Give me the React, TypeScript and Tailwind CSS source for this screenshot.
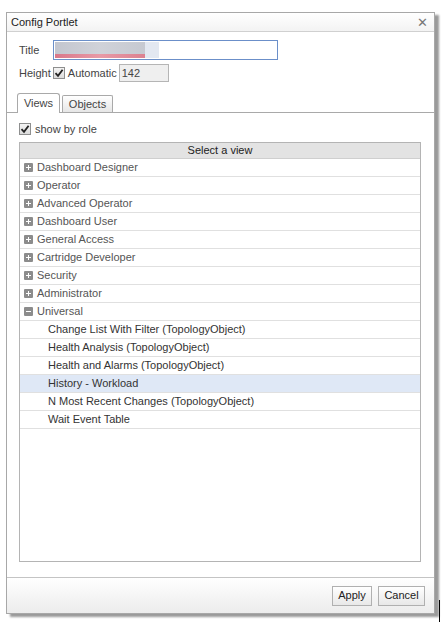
import React from 'react';

const groups = [
  'Dashboard Designer',
  'Operator',
  'Advanced Operator',
  'Dashboard User',
  'General Access',
  'Cartridge Developer',
  'Security',
  'Administrator',
];

const views = [
  'Change List With Filter (TopologyObject)',
  'Health Analysis (TopologyObject)',
  'Health and Alarms (TopologyObject)',
  'History - Workload',
  'N Most Recent Changes (TopologyObject)',
  'Wait Event Table',
];

function Toggle({ open }: { open: boolean }) {
  return (
    <svg width="9" height="9" viewBox="0 0 9 9" className="shrink-0">
      <rect width="9" height="9" rx="1" fill="#8c8c8c" />
      <rect x="2" y="4" width="5" height="1" fill="#fff" />
      {!open && <rect x="4" y="2" width="1" height="5" fill="#fff" />}
    </svg>
  );
}

function Check() {
  return (
    <span className="w-[12px] h-[12px] border border-[#8e8f8f] bg-gradient-to-b from-[#f4f4f4] to-[#dcdcdc] flex items-center justify-center shrink-0">
      <svg width="10" height="10" viewBox="0 0 10 10">
        <path d="M1.5 5.2 L4 7.8 L8.6 1.8" fill="none" stroke="#222" strokeWidth="1.8" />
      </svg>
    </span>
  );
}

export default function App() {
  return (
    <div className="relative w-[444px] h-[622px] bg-white text-[11px] text-[#444] font-['Liberation_Sans',Arial,sans-serif] pt-[12px] pl-[6px]">
      {/* dialog */}
      <div className="w-[429px] h-[602px] border border-[#a8a8a8] bg-white flex flex-col shadow-[4px_3px_2px_#9a9a9a]">
        <div className="h-[19px] flex items-center justify-between pl-[4px] pr-[6px] border-b border-[#d0d0d0] bg-gradient-to-b from-white to-[#f3f3f3]">
          <span className="text-[#222]">Config Portlet</span>
          <span className="text-[#777] text-[13px] leading-none">✕</span>
        </div>

        <div className="flex-1 flex flex-col pt-[8px]">
          <div className="flex items-center pl-[12px] h-[20px]">
            <span className="w-[34px]">Title</span>
            <div className="relative w-[225px] h-[20px] border border-[#6b8fc9] bg-white">
              <div className="absolute left-[1px] top-[1px] w-[104px] h-[16px] flex">
                <div className="flex-1 flex flex-col">
                  <div className="flex-1 bg-gradient-to-r from-[#c3c6cf] via-[#d0d2d9] to-[#c6c9d1]" />
                  <div className="h-[4px] bg-gradient-to-r from-[#d9788a] via-[#e89aa6] to-[#dc8190]" />
                </div>
                <div className="w-[14px] bg-[#e3e8f1]" />
              </div>
            </div>
          </div>

          <div className="flex items-center pl-[12px] mt-[4px] h-[18px] gap-[2px]">
            <span>Height</span>
            <Check />
            <span className="ml-[1px]">Automatic</span>
            <div className="w-[50px] h-[18px] border border-[#b5b5b5] bg-[#efefef] pl-[2px] leading-[16px] text-[#444]">142</div>
          </div>

          {/* tabs */}
          <div className="flex items-end mt-[11px] pl-[10px] h-[20px] border-b border-[#a9a9a9]">
            <div className="h-[20px] w-[43px] border border-b-0 border-[#a9a9a9] rounded-t-[3px] bg-white flex items-center justify-center -mb-px relative z-10">
              Views
            </div>
            <div className="h-[17px] w-[51px] ml-[2px] border border-b-0 border-[#a9a9a9] rounded-t-[2px] bg-gradient-to-b from-white to-[#e6e6e6] flex items-center justify-center">
              Objects
            </div>
          </div>

          <div className="flex items-center gap-[4px] pl-[12px] mt-[9px] h-[14px]">
            <Check />
            <span>show by role</span>
          </div>

          {/* view picker */}
          <div className="ml-[12px] mr-[13px] mt-[6px] h-[420px] border border-[#b4b4b4] bg-white">
            <div className="h-[16px] bg-[#e3e3e3] border-b border-[#cfcfcf] flex items-center justify-center text-[#222]">
              Select a view
            </div>
            {groups.map((g) => (
              <div key={g} className="h-[18px] border-b border-[#e0e0e0] flex items-center gap-[4px] pl-[4px] text-[#555]">
                <Toggle open={false} />
                <span>{g}</span>
              </div>
            ))}
            <div className="h-[18px] border-b border-[#e0e0e0] flex items-center gap-[4px] pl-[4px] text-[#555]">
              <Toggle open />
              <span>Universal</span>
            </div>
            {views.map((v) => (
              <div
                key={v}
                className={
                  'h-[18px] border-b border-[#e0e0e0] flex items-center pl-[28px] text-[#333] ' +
                  (v === 'History - Workload' ? 'bg-[#dfe8f6]' : '')
                }
              >
                {v}
              </div>
            ))}
          </div>
        </div>

        {/* footer */}
        <div className="h-[36px] border-t border-[#c4c4c4] bg-gradient-to-b from-white to-[#ececec] flex items-center justify-end gap-[6px] pr-[9px]">
          <button className="h-[20px] w-[40px] border border-[#b0b0b0] bg-gradient-to-b from-white to-[#e8e8e8] text-[#222]">Apply</button>
          <button className="h-[20px] w-[47px] border border-[#b0b0b0] bg-gradient-to-b from-white to-[#e8e8e8] text-[#222]">Cancel</button>
        </div>
      </div>
      <div className="absolute left-[439px] top-[600px] w-[1px] h-[22px] bg-black" />
    </div>
  );
}
